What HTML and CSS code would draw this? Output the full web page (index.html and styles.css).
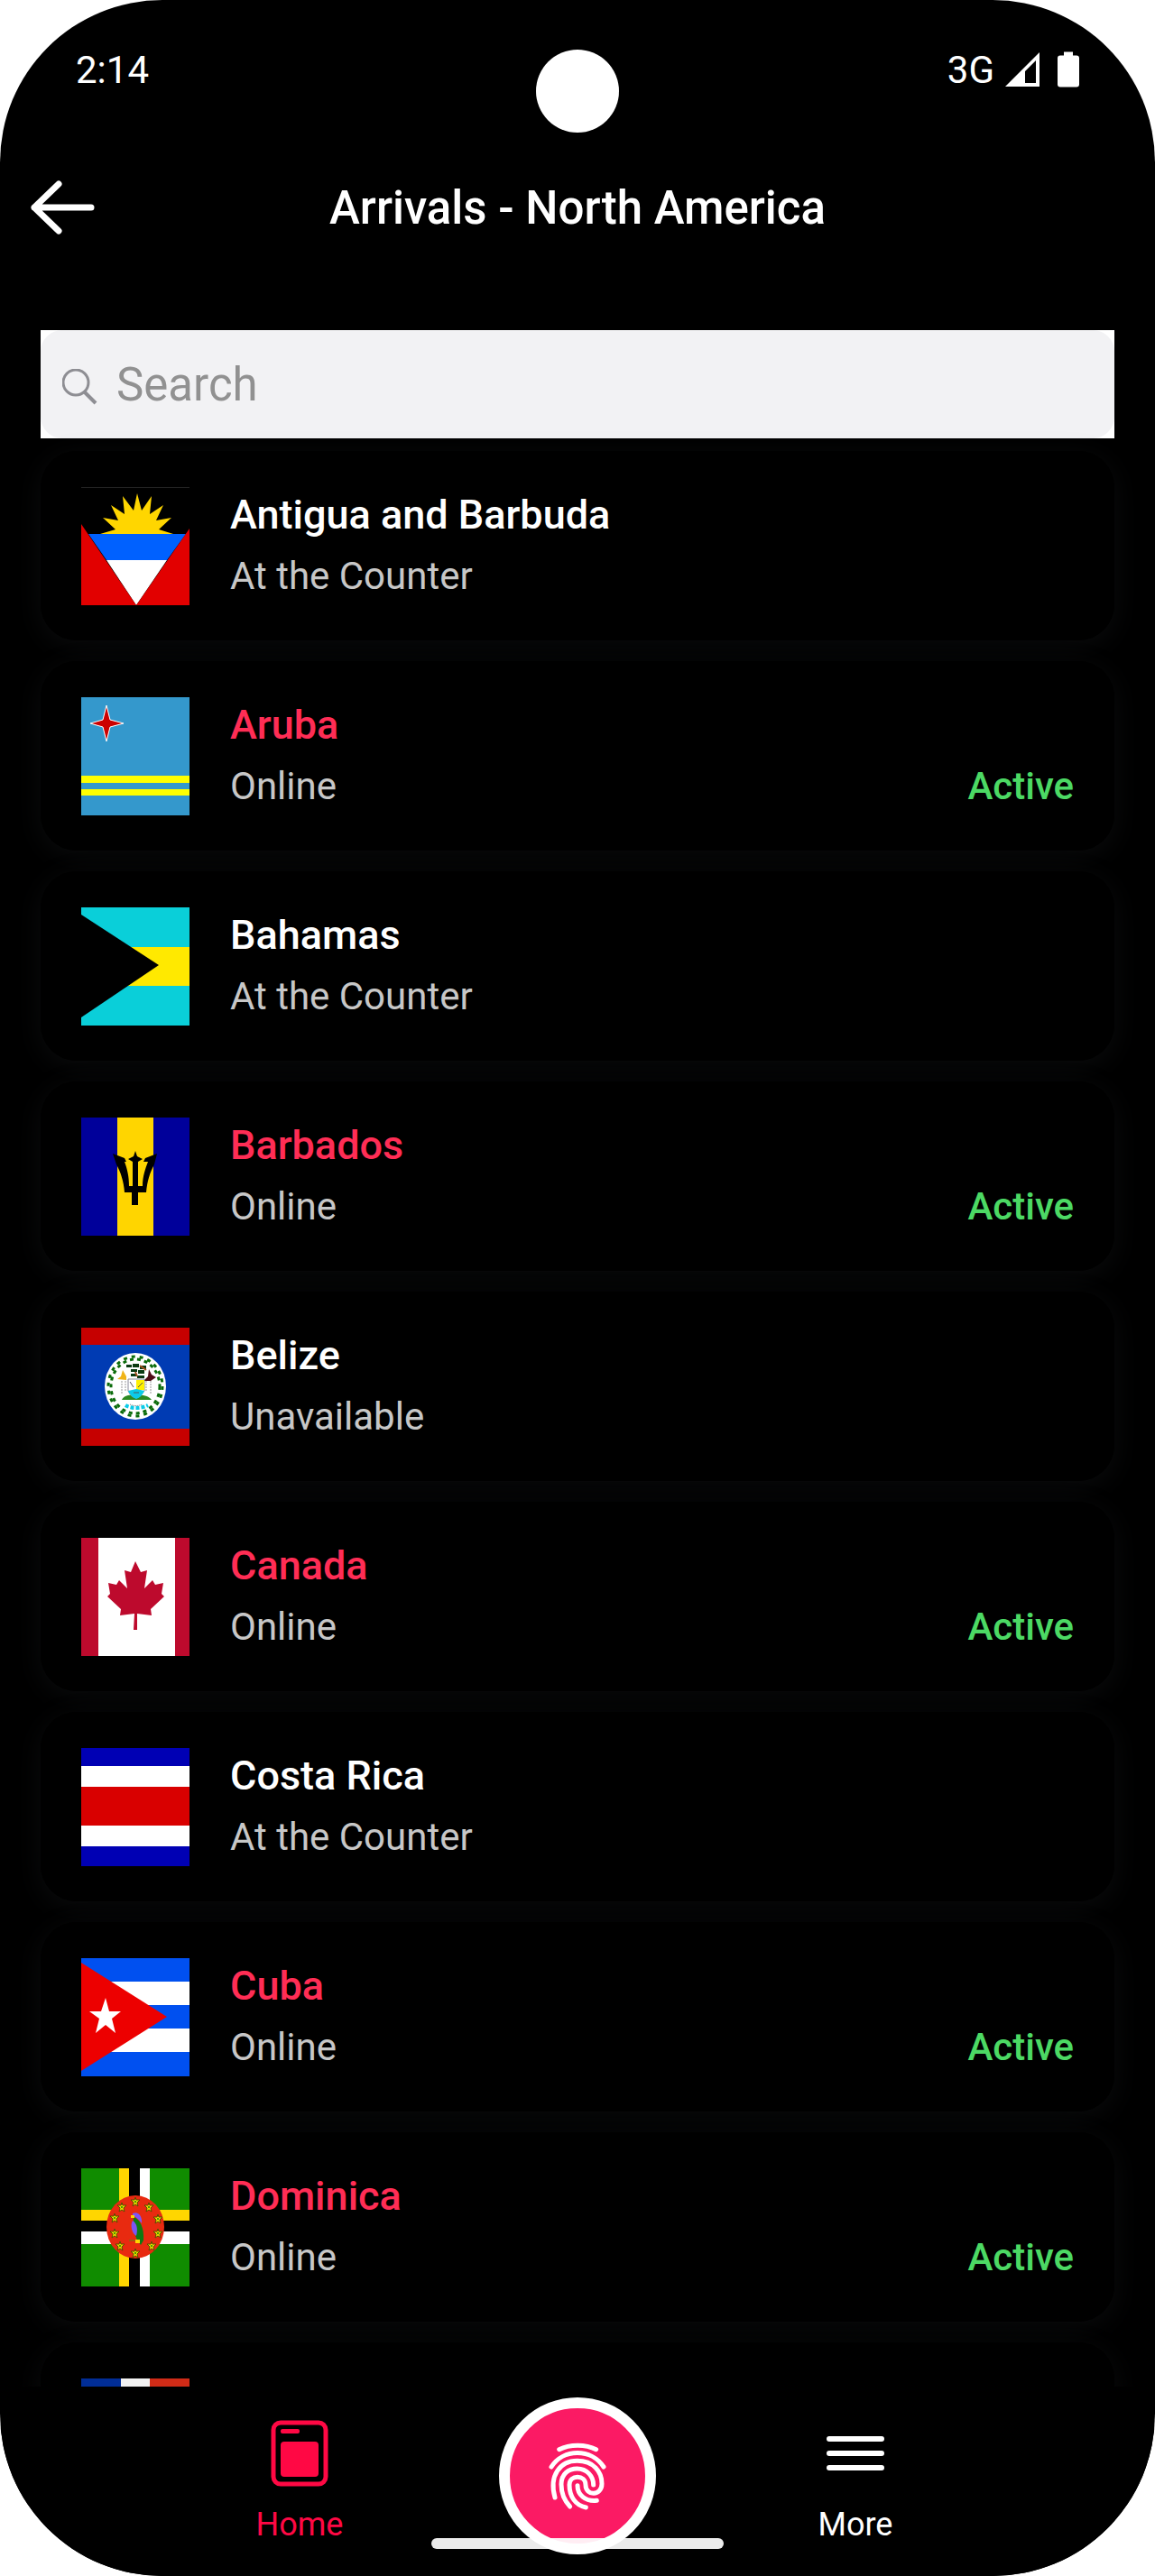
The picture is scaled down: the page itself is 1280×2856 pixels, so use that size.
FILE: index.html
```html
<!DOCTYPE html>
<html lang="en">

<head>
  <meta charset="UTF-8" />
  <meta name="viewport" content="width=device-width, initial-scale=1.0" />
  <title>Arrivals - North America</title>
  <link rel="stylesheet" href="styles.css">
</head>

<body>
  <div class="phone">
    <div class="status-bar">
      <span>2:14</span>
      <span class="camera"></span>
      <div class="status-icons">
        <span>3G</span>
        <svg class="signal" viewBox="0 0 38 38"><path fill="#fff" fill-rule="evenodd" d="M38 0V38H0zM34 9L22 21V34H34z" /></svg>
        <svg class="battery" viewBox="0 0 24 39"><path fill="#fff" d="M7 0h10v4h4q3 0 3 3v29q0 3-3 3H3q-3 0-3-3V7q0-3 3-3h4z" /></svg>
      </div>
    </div>

    <header class="header">
      <button class="back-btn" aria-label="Back">
        <svg viewBox="0 0 72 60"><path d="M31 4L4 30l27 26M4 30h63" fill="none" stroke="#fff" stroke-width="7" stroke-linecap="round" stroke-linejoin="round" /></svg>
      </button>
      <h1>Arrivals - North America</h1>
    </header>

    <main class="main">
      <div class="search-wrap">
        <label class="search-box">
          <svg viewBox="0 0 40 40" fill="none" stroke="#8e8e93">
            <circle cx="15" cy="15" r="14" stroke-width="3" />
            <path d="M25 26l12 12" stroke-width="4" />
          </svg>
          <input type="search" placeholder="Search" aria-label="Search" />
        </label>
      </div>

      <ul class="country-list">
        <li>
          <a href="#" class="card">
            <svg class="flag" viewBox="0 0 120 131">
              <path fill="#222" d="M0 0h120v1H0z" />
              <path fill="#ffd600" d="M62 7l5 19 11-16-2 20 15-10-8 17 17-3-14 13 16 5H21l17-5-14-13 17 3-8-17 15 10-2-20 12 16z" />
              <path fill="#0061ff" d="M8 52h108L95 81H28z" />
              <path fill="#fff" d="M28 81h67l-34 50z" />
              <path fill="#e20000" d="M0 41l61 90H0zM120 46v85H61z" />
            </svg>
            <div class="info">
              <h2>Antigua and Barbuda</h2>
              <p>At the Counter</p>
            </div>
          </a>
        </li>
        <li>
          <a href="#" class="card online">
            <svg class="flag" viewBox="0 0 120 131">
              <path fill="#3498cc" d="M0 0h120v131H0z" />
              <path fill="#ff0" d="M0 87h120v8H0zM0 102h120v7H0z" />
              <path fill="#c00" stroke="#fff" d="M28 9l4 16 15 4-15 4-4 16-4-16-14-4 14-4z" />
            </svg>
            <div class="info">
              <h2>Aruba</h2>
              <p>Online</p>
            </div>
            <span class="active">Active</span>
          </a>
        </li>
        <li>
          <a href="#" class="card">
            <svg class="flag" viewBox="0 0 120 131">
              <path fill="#0acfd9" d="M0 0h120v131H0z" />
              <path fill="#ffe900" d="M0 44h120v43H0z" />
              <path d="M0 8l86 56-86 58z" />
            </svg>
            <div class="info">
              <h2>Bahamas</h2>
              <p>At the Counter</p>
            </div>
          </a>
        </li>
        <li>
          <a href="#" class="card online">
            <svg class="flag" viewBox="0 0 120 131">
              <path fill="#00009a" d="M0 0h120v131H0z" />
              <path fill="#ffd500" d="M40 0h40v131H40z" />
              <path d="M60 37l2 6 6 3-5 3v27h5c0-11 3-19 6-27h-5l2-4 13-5-3 12c-5 9-8 19-9 31h-9v14h-7V83h-8c-1-12-4-22-9-31l-4-12 13 5 2 4h-2c3 8 5 16 5 27h4V49l-5-3 6-3z" />
            </svg>
            <div class="info">
              <h2>Barbados</h2>
              <p>Online</p>
            </div>
            <span class="active">Active</span>
          </a>
        </li>
        <li>
          <a href="#" class="card">
            <svg class="flag" viewBox="0 0 120 131">
              <path fill="#c60000" d="M0 0h120v131H0z" />
              <path fill="#003bb3" d="M0 19h120v93H0z" />
              <ellipse cx="60" cy="65" rx="34" ry="37" fill="#fff" />
              <g fill="none" stroke="#0a6b0a">
                <ellipse cx="60" cy="65" rx="27" ry="30" stroke-width="3" stroke-dasharray="4 4" />
                <ellipse cx="60" cy="65" rx="30" ry="33" stroke-width="3" stroke-dasharray="4 5" />
              </g>
              <path fill="#0b3a12" d="M50 41h6v3h-6zM57 40h7v4h-7zM65 42h7v4h-7zM55 46h7v3h-7zM63 47h7v4h-7zM55 51h6v3h-6zM62 53h8v3h-8z" />
              <path fill="#f0b419" d="M46 47l4 7v4l-10-1 4-3z" />
              <path fill="#4d0c16" d="M75 46l3 6 5 3-6 4h-8l5-5z" />
              <path d="M65 42l7 5M60 49l2 5" stroke="#a4501c" stroke-width="2" />
              <path d="M45 59v14M49 59v12M72 59v12M77 59v14" stroke="#999" stroke-dasharray="2 1" />
              <path fill="#2c8a22" d="M45 80c2-5 8-6 15-5 7-1 15 0 18 5z" />
              <path fill="#fff" stroke="#889" d="M52 57h18v13q-4 7-9 8-6-1-9-8z" />
              <path fill="#fff000" d="M61 58h9v11h-9z" />
              <path fill="#0bcbe8" d="M52 70l9-2 9 2q-3 7-9 9-6-2-9-9z" />
              <path d="M54 60l4 6M63 66l5-5M58 72h6" stroke="#555" />
              <path d="M49 86c6 4 17 4 25 0" fill="none" stroke="#0bcbe8" stroke-width="4" stroke-dasharray="4 2" />
              <path d="M54 85c4 2 9 2 14 0" fill="none" stroke="#777" stroke-dasharray="1 1" />
            </svg>
            <div class="info">
              <h2>Belize</h2>
              <p>Unavailable</p>
            </div>
          </a>
        </li>
        <li>
          <a href="#" class="card online">
            <svg class="flag" viewBox="0 0 120 131">
              <path fill="#bd0a2d" d="M0 0h120v131H0z" />
              <path fill="#fff" d="M19 0h85v131H19z" />
              <path fill="#bd0a2d" d="M60 26l6 12 7-2-3 20 9-9 3 5 9-2-2 12 3 3-15 14 1 7-16-2v18h-4l1-18-16 2 1-7-15-14 3-3-2-12 9 2 3-5 9 9-3-20 7 2z" />
            </svg>
            <div class="info">
              <h2>Canada</h2>
              <p>Online</p>
            </div>
            <span class="active">Active</span>
          </a>
        </li>
        <li>
          <a href="#" class="card">
            <svg class="flag" viewBox="0 0 120 131">
              <path fill="#0000b4" d="M0 0h120v131H0z" />
              <path fill="#fff" d="M0 20h120v89H0z" />
              <path fill="#d90000" d="M0 43h120v43H0z" />
            </svg>
            <div class="info">
              <h2>Costa Rica</h2>
              <p>At the Counter</p>
            </div>
          </a>
        </li>
        <li>
          <a href="#" class="card online">
            <svg class="flag" viewBox="0 0 120 131">
              <path fill="#0050f0" d="M0 0h120v131H0z" />
              <path fill="#fff" d="M0 26h120v26H0zM0 78h120v26H0z" />
              <path fill="#ed0000" d="M0 5l95 60-95 60z" />
              <path fill="#fff" d="M27 44l4 15h13l-10 8 4 16-11-9-11 9 4-16-11-8h13z" />
            </svg>
            <div class="info">
              <h2>Cuba</h2>
              <p>Online</p>
            </div>
            <span class="active">Active</span>
          </a>
        </li>
        <li>
          <a href="#" class="card online">
            <svg class="flag" viewBox="0 0 120 131">
              <defs>
                <g id="star">
                  <path fill="#e8d800" stroke="#5b4a00" stroke-width="1" d="M0-5l1 3h4L2 1l1 4-3-2-3 2 1-4-3-3h4z" />
                  <circle r="1" fill="#108c00" />
                </g>
              </defs>
              <path fill="#108c00" d="M0 0h120v131H0z" />
              <path fill="#ffd600" d="M42 0h12v131H42zM0 46h120v12H0z" />
              <path fill="#fff" d="M65 0h11v131H65zM0 70h120v14H0z" />
              <path d="M53 0h12v131H53zM0 58h120v12H0z" />
              <ellipse cx="60" cy="65" rx="32" ry="35" fill="#e82a10" />
              <use href="#star" x="60" y="37" />
              <use href="#star" x="45" y="43" />
              <use href="#star" x="75" y="43" />
              <use href="#star" x="37" y="55" />
              <use href="#star" x="85" y="56" />
              <use href="#star" x="37" y="72" />
              <use href="#star" x="85" y="72" />
              <use href="#star" x="43" y="86" />
              <use href="#star" x="78" y="86" />
              <use href="#star" x="60" y="94" />
              <path fill="#0e7a12" d="M58 54c7 2 12 12 11 26l-3 5c-7-7-9-20-8-31z" />
              <path fill="#7d55f5" d="M57 50c6-3 11 3 10 11-3-4-7-8-10-8zM57 58c5 3 6 10 4 17-5-3-7-12-4-17z" />
              <path fill="#ffd600" d="M55 52h4v3h-4zM60 79h5v4h-5z" />
              <path fill="#a05a10" d="M53 79h7v2h-7z" />
            </svg>
            <div class="info">
              <h2>Dominica</h2>
              <p>Online</p>
            </div>
            <span class="active">Active</span>
          </a>
        </li>
        <li>
          <a href="#" class="card online" aria-label="Dominican Republic">
            <svg class="flag" viewBox="0 0 120 131">
              <path fill="#f2f2f2" d="M0 0h120v131H0z" />
              <path fill="#012d96" d="M0 0h44v50H0zM76 81h44v50H76z" />
              <path fill="#cf2b17" d="M76 0h44v50H76zM0 81h44v50H0z" />
            </svg>
          </a>
        </li>
      </ul>
    </main>

    <nav class="tab-bar">
      <a href="#" class="tab selected">
        <svg viewBox="0 0 64 74">
          <rect x="3" y="3" width="58" height="68" rx="8" fill="none" stroke="#ff0844" stroke-width="5" />
          <rect x="11" y="10" width="21" height="5" rx="2" fill="#ff0844" />
          <rect x="11" y="24" width="42" height="39" rx="4" fill="#ff0844" />
        </svg>
        <span>Home</span>
      </a>
      <button class="scan-btn" aria-label="Fingerprint">
        <svg viewBox="980 165 204 234" fill="none" stroke="#fff" stroke-width="15" stroke-linecap="round">
          <path d="M1021 194C1056 176 1109 176 1144 194" />
          <path d="M995 252C1035 190 1128 190 1169 252" />
          <path d="M1007 354C986 280 1025 232 1081 232C1135 232 1163 268 1163 308C1163 349 1109 350 1109 312C1109 277 1055 277 1055 312C1055 350 1075 380 1110 387" />
          <path d="M1057 384C1032 358 1028 328 1028 310C1028 275 1052 258 1081 258C1113 258 1135 283 1135 312" />
          <path d="M1082 314C1082 345 1108 368 1146 364" />
        </svg>
      </button>
      <a href="#" class="tab">
        <svg viewBox="0 0 64 74">
          <path d="M3 21h58M3 37h58M3 53h58" stroke="#fff" stroke-width="6" stroke-linecap="round" />
        </svg>
        <span>More</span>
      </a>
      <span class="gesture-bar"></span>
    </nav>
  </div>
</body>

</html>
```

FILE: styles.css
```css
:root {
  --black: #000000;
  --white: #ffffff;
  --accent: #ff2d55;
  --pink: #fb1a64;
  --green: #4cd964;
  --gray: #c7c7c7;
}

* {
  box-sizing: border-box;
}

body {
  margin: 0;
  font-family: Roboto, sans-serif;
  background-color: var(--white);
  color: var(--white);
}

h1,
h2,
p,
ul {
  margin: 0;
  padding: 0;
}

a {
  color: inherit;
  text-decoration: none;
}

button {
  padding: 0;
  border: none;
  background: none;
  cursor: pointer;
}

svg {
  display: block;
  flex: none;
}

.phone {
  height: 100vh;
  display: flex;
  flex-direction: column;
  overflow: hidden;
  border-radius: 180px;
  background-color: var(--black);
}

/* status bar */
.status-bar {
  position: relative;
  flex: none;
  display: flex;
  justify-content: space-between;
  align-items: center;
  height: 154px;
  padding: 0 84px;
  font-size: 42px;
}

.camera {
  position: absolute;
  left: 50%;
  top: 55px;
  width: 92px;
  height: 92px;
  margin-left: -46px;
  border-radius: 50%;
  background: var(--white);
}

.status-icons {
  display: flex;
  align-items: center;
}

.signal {
  width: 38px;
  height: 38px;
  margin: 0 20px 0 12px;
}

.battery {
  width: 24px;
  height: 40px;
}

/* header */
.header {
  flex: none;
  display: grid;
  grid-template-columns: 72px 1fr 72px;
  align-items: center;
  height: 152px;
  padding: 0 34px;
}

.back-btn svg {
  width: 72px;
  height: 60px;
}

.header h1 {
  font-size: 51px;
  font-weight: 500;
  text-align: center;
}

/* list */
.main {
  flex: 1;
  min-height: 0;
  padding: 60px 45px 0;
  overflow: hidden;
}

.search-wrap {
  background: var(--white);
}

.search-box {
  display: flex;
  align-items: center;
  gap: 20px;
  height: 120px;
  padding: 0 24px;
  border-radius: 24px;
  background: #f2f2f4;
}

.search-box svg {
  width: 40px;
  height: 40px;
  margin-top: 6px;
}

.search-box input {
  flex: 1;
  min-width: 0;
  padding: 0;
  border: none;
  outline: none;
  background: none;
  font: 51px Roboto, sans-serif;
}

.search-box input::placeholder {
  color: #919191;
}

.country-list {
  display: flex;
  flex-direction: column;
  gap: 23px;
  padding-top: 14px;
  list-style: none;
}

.country-list li {
  border-radius: 40px;
  box-shadow: 0 6px 32px rgba(110, 115, 125, 0.1);
}

.card {
  position: relative;
  z-index: 1;
  display: flex;
  align-items: center;
  gap: 45px;
  min-height: 210px;
  padding: 37px 45px;
  border-radius: 40px;
  background: var(--black);
}

.flag {
  width: 120px;
  height: 131px;
}

.info {
  flex: 1;
}

.info h2 {
  font-size: 45px;
  font-weight: 500;
  line-height: 68px;
}

.info p {
  font-size: 42px;
  line-height: 68px;
  color: var(--gray);
}

.online h2 {
  color: var(--accent);
}

.active {
  align-self: flex-end;
  font-size: 42px;
  font-weight: 500;
  line-height: 68px;
  color: var(--green);
}

/* bottom tabs */
.tab-bar {
  position: relative;
  z-index: 2;
  flex: none;
  display: grid;
  grid-template-columns: repeat(3, 308px);
  justify-content: center;
  justify-items: center;
  align-items: start;
  height: 210px;
  border-radius: 60px 60px 0 0;
  background: var(--black);
}

.tab {
  display: flex;
  flex-direction: column;
  align-items: center;
  gap: 20px;
  margin-top: 37px;
  font-size: 36px;
  line-height: 44px;
}

.tab svg {
  width: 64px;
  height: 74px;
}

.selected {
  color: #ff0844;
}

.scan-btn {
  display: flex;
  justify-content: center;
  align-items: center;
  width: 174px;
  height: 174px;
  margin-top: 12px;
  border: 12px solid var(--white);
  border-radius: 50%;
  background: var(--pink);
}

.scan-btn svg {
  width: 68px;
  height: 78px;
}

.gesture-bar {
  position: absolute;
  left: 50%;
  bottom: 30px;
  width: 324px;
  height: 12px;
  margin-left: -162px;
  border-radius: 6px;
  background: rgba(255, 255, 255, 0.92);
}
```
